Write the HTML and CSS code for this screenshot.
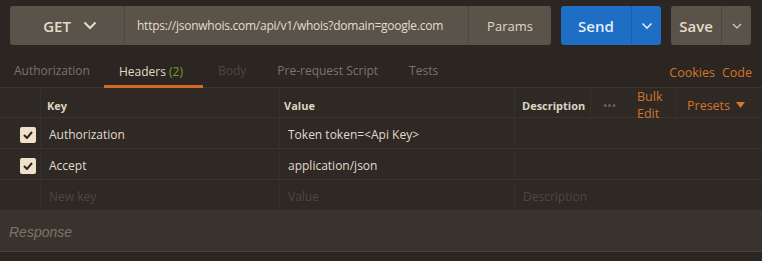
FILE: index.html
```html
<!DOCTYPE html>
<html lang="en">
<head>
    <meta charset="UTF-8">
    <title>Request builder</title>
    <link rel="stylesheet" href="styles.css">
</head>
<body>
    <div class="topbar">
        <div class="request">
            <div class="method">GET <svg width="14" height="9" viewBox="0 0 14 9"><path d="M1.5 1.5 L7 7 L12.5 1.5" fill="none" stroke="#e6dccb" stroke-width="2"/></svg></div>
            <div class="url">https://jsonwhois.com/api/v1/whois?domain=google.com</div>
            <div class="params">Params</div>
        </div>
        <div class="btn send">
            <span class="btn-label">Send</span>
            <span class="btn-caret"><svg width="12" height="8" viewBox="0 0 12 8"><path d="M1.5 1.5 L6 6 L10.5 1.5" fill="none" stroke="#dfe9f6" stroke-width="1.6"/></svg></span>
        </div>
        <div class="btn save">
            <span class="btn-label">Save</span>
            <span class="btn-caret"><svg width="10" height="6" viewBox="0 0 10 6"><path d="M1 1 L5 5 L9 1" fill="none" stroke="#d9cfbf" stroke-width="1.2"/></svg></span>
        </div>
    </div>

    <div class="tabs">
        <div class="tab dim tab-auth">Authorization</div>
        <div class="tab active">Headers <span class="count">(2)</span></div>
        <div class="tab off tab-body">Body</div>
        <div class="tab dim tab-pre">Pre-request Script</div>
        <div class="tab dim tab-tests">Tests</div>
        <div class="links">
            <span>Cookies</span>
            <span>Code</span>
        </div>
    </div>

    <div class="table">
        <div class="row head">
            <div class="cell check"></div>
            <div class="cell">Key</div>
            <div class="cell">Value</div>
            <div class="cell desc-head">
                <span class="desc-label">Description</span>
                <span class="dots">&bull;&bull;&bull;</span>
                <span class="bulk">Bulk<br>Edit</span>
                <span class="presets">Presets <svg width="9" height="6" viewBox="0 0 9 6"><path d="M0 0 H9 L4.5 6 Z" fill="#d9772e"/></svg></span>
            </div>
        </div>
        <div class="row">
            <div class="cell check"><span class="box"><svg width="10" height="8" viewBox="0 0 10 8"><path d="M1 4 L4 7 L9 1" fill="none" stroke="#2c2621" stroke-width="2"/></svg></span></div>
            <div class="cell">Authorization</div>
            <div class="cell">Token token=&lt;Api Key&gt;</div>
            <div class="cell"></div>
        </div>
        <div class="row">
            <div class="cell check"><span class="box"><svg width="10" height="8" viewBox="0 0 10 8"><path d="M1 4 L4 7 L9 1" fill="none" stroke="#2c2621" stroke-width="2"/></svg></span></div>
            <div class="cell">Accept</div>
            <div class="cell">application/json</div>
            <div class="cell"></div>
        </div>
        <div class="row placeholder">
            <div class="cell check"></div>
            <div class="cell">New key</div>
            <div class="cell">Value</div>
            <div class="cell">Description</div>
        </div>
    </div>

    <div class="response">Response</div>
</body>
</html>
```

FILE: styles.css
```css
body {
    margin: 0;
    background-color: #2b2621;
    font-family: "Open Sans", "Noto Sans", sans-serif;
    color: #e3d9c9;
    width: 762px;
    height: 261px;
    overflow: hidden;
}
.topbar {
    display: flex;
    gap: 10px;
    padding: 6px 0 0 10px;
    height: 39px;
}
.request {
    display: flex;
    width: 541px;
    background-color: #5a5349;
    border-radius: 3px;
    font-size: 13px;
}
.method {
    width: 115px;
    display: flex;
    align-items: center;
    justify-content: center;
    gap: 12px;
    font-size: 15px;
    font-weight: 600;
    color: #e6dccb;
    border-right: 1px solid #4c463e;
    box-sizing: border-box;
    padding-left: 6px;
}
.url {
    flex: 1;
    display: flex;
    align-items: center;
    padding-left: 12px;
    color: #e6dccb;
    font-size: 12px;
    letter-spacing: -0.25px;
    white-space: nowrap;
    overflow: hidden;
}
.params {
    width: 82px;
    display: flex;
    align-items: center;
    justify-content: center;
    border-left: 1px solid #4c463e;
    color: #e0d6c6;
}
.btn {
    display: flex;
    border-radius: 3px;
    font-size: 15px;
    font-weight: 600;
}
.btn-label {
    display: flex;
    align-items: center;
    justify-content: center;
}
.btn-caret {
    display: flex;
    align-items: center;
    justify-content: center;
}
.send {
    width: 100px;
    background-color: #1d6ec4;
    color: #e4edf8;
}
.send .btn-label {
    width: 70px;
    border-right: 1px solid #1a5fa8;
}
.send .btn-caret {
    flex: 1;
}
.save {
    width: 80px;
    background-color: #5a5349;
    color: #e6dccb;
}
.save .btn-label {
    width: 50px;
    border-right: 1px solid #4c463e;
}
.save .btn-caret {
    flex: 1;
}
.tabs {
    display: flex;
    align-items: flex-end;
    height: 43px;
    font-size: 12px;
    border-bottom: 1px solid #3c362f;
    box-sizing: border-box;
}
.tab {
    padding: 0 0 8px 0;
    white-space: nowrap;
}
.tab-auth {
    margin-left: 14px;
    margin-right: 14px;
}
.tab-body {
    margin-left: 15px;
}
.tab-pre {
    margin-left: 31px;
}
.tab-tests {
    margin-left: 31px;
}
.tab.dim {
    color: #7a746c;
}
.tab.off {
    color: #4b463f;
}
.tab.active {
    color: #e3d9c9;
    border-bottom: 3px solid #d2692a;
    padding: 0 20px 5px 15px;
    margin-bottom: -1px;
}
.count {
    color: #7d9b2c;
}
.links {
    margin-left: auto;
    margin-right: 10px;
    display: flex;
    gap: 7px;
    padding-bottom: 6px;
    color: #d5732c;
    font-size: 12.5px;
}
.table {
    background-color: #2e2924;
}
.row {
    display: grid;
    grid-template-columns: 40px 239px 235px 1fr;
    height: 31px;
    padding-top: 3px;
    border-bottom: 1px solid #3a342e;
    box-sizing: border-box;
    font-size: 12px;
    color: #e3d9c9;
}
.cell {
    display: flex;
    align-items: center;
    padding-left: 8px;
    border-left: 1px solid #37312b;
}
.cell.check {
    border-left: none;
    padding-left: 20px;
}
.box {
    width: 16px;
    height: 16px;
    background-color: #efe1c9;
    border-radius: 2px;
    display: flex;
    align-items: center;
    justify-content: center;
}
.head {
    height: 30px;
    padding-top: 0;
    font-size: 11px;
    font-weight: 700;
    color: #ddd3c3;
}
.head .cell {
    padding-left: 6px;
}
.head .cell:nth-child(3) {
    padding-left: 4px;
}
.head .check,
.head .desc-head {
    padding-left: 0;
}
.desc-label {
    width: 76px;
    display: flex;
    align-items: center;
    height: 100%;
    padding-left: 7px;
    box-sizing: border-box;
    border-right: 1px solid #37312b;
}
.dots {
    width: 38px;
    text-align: center;
    color: #6c665e;
    font-size: 9px;
    letter-spacing: 1px;
}
.bulk {
    width: 48px;
    height: 100%;
    display: flex;
    align-items: center;
    color: #d5732c;
    font-weight: 400;
    font-size: 12.5px;
    line-height: 17px;
    padding-left: 8px;
    box-sizing: border-box;
    border-right: 1px solid #37312b;
}
.presets {
    padding-left: 10px;
    color: #d5732c;
    font-weight: 400;
    font-size: 12.5px;
    display: flex;
    align-items: center;
    gap: 6px;
}
.placeholder {
    color: #4d4740;
}
.response {
    height: 41px;
    padding-top: 2px;
    box-sizing: border-box;
    background-color: #3a332d;
    border-bottom: 1px solid #4a433b;
    display: flex;
    align-items: center;
    padding-left: 9px;
    font-family: "Liberation Sans", Arial, sans-serif;
    font-style: italic;
    font-size: 14px;
    color: #7a736a;
}
```
